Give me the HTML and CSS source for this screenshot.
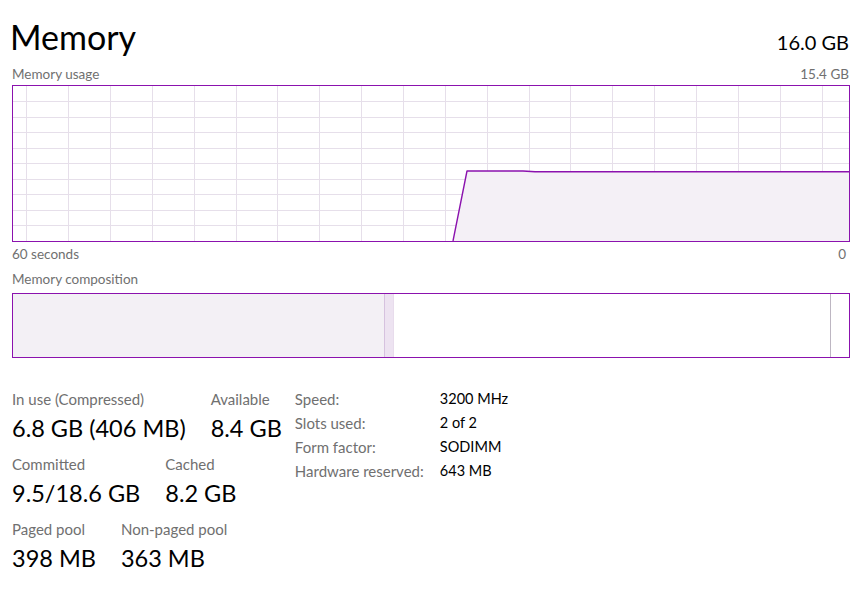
FILE: index.html
```html
<!DOCTYPE html>
<html>
<head>
<meta charset="utf-8">
<link rel="stylesheet" href="styles.css">
</head>
<body>
<div class="page">
  <div class="header">
    <h1 class="title">Memory</h1>
    <div class="total">16.0 GB</div>
  </div>
  <div class="caption-row usage-label">
    <span>Memory usage</span>
    <span>15.4 GB</span>
  </div>
  <div class="graph">
    <svg class="graph-svg" width="836" height="155" viewBox="0 0 836 155">
      <g class="grid">
        <line x1="13.5" y1="0" x2="13.5" y2="155"/>
        <line x1="55.5" y1="0" x2="55.5" y2="155"/>
        <line x1="97.5" y1="0" x2="97.5" y2="155"/>
        <line x1="139.5" y1="0" x2="139.5" y2="155"/>
        <line x1="181.5" y1="0" x2="181.5" y2="155"/>
        <line x1="223.5" y1="0" x2="223.5" y2="155"/>
        <line x1="264.5" y1="0" x2="264.5" y2="155"/>
        <line x1="306.5" y1="0" x2="306.5" y2="155"/>
        <line x1="348.5" y1="0" x2="348.5" y2="155"/>
        <line x1="390.5" y1="0" x2="390.5" y2="155"/>
        <line x1="432.5" y1="0" x2="432.5" y2="155"/>
        <line x1="474.5" y1="0" x2="474.5" y2="155"/>
        <line x1="516.5" y1="0" x2="516.5" y2="155"/>
        <line x1="557.5" y1="0" x2="557.5" y2="155"/>
        <line x1="599.5" y1="0" x2="599.5" y2="155"/>
        <line x1="641.5" y1="0" x2="641.5" y2="155"/>
        <line x1="683.5" y1="0" x2="683.5" y2="155"/>
        <line x1="725.5" y1="0" x2="725.5" y2="155"/>
        <line x1="767.5" y1="0" x2="767.5" y2="155"/>
        <line x1="809.5" y1="0" x2="809.5" y2="155"/>
        <line x1="0" y1="15.5" x2="836" y2="15.5"/>
        <line x1="0" y1="31.5" x2="836" y2="31.5"/>
        <line x1="0" y1="46.5" x2="836" y2="46.5"/>
        <line x1="0" y1="62.5" x2="836" y2="62.5"/>
        <line x1="0" y1="77.5" x2="836" y2="77.5"/>
        <line x1="0" y1="93.5" x2="836" y2="93.5"/>
        <line x1="0" y1="108.5" x2="836" y2="108.5"/>
        <line x1="0" y1="124.5" x2="836" y2="124.5"/>
        <line x1="0" y1="139.5" x2="836" y2="139.5"/>
      </g>
      <polygon class="area" points="440,155 454,85 510,85 522,85.8 836,85.8 836,155"/>
      <polyline class="usage" points="440,155 454,85 510,85 522,85.8 836,85.8"/>
    </svg>
  </div>
  <div class="caption-row axis">
    <span>60 seconds</span>
    <span>0</span>
  </div>
  <div class="caption-row comp-label">
    <span>Memory composition</span>
  </div>
  <div class="composition">
    <div class="seg in-use"></div>
    <div class="seg modified"></div>
    <div class="seg standby"></div>
    <div class="seg free"></div>
  </div>
  <div class="details">
    <div class="stats">
      <div class="stat-row">
        <div class="stat"><div class="stat-label">In use (Compressed)</div><div class="stat-value">6.8 GB (406 MB)</div></div>
        <div class="stat"><div class="stat-label">Available</div><div class="stat-value">8.4 GB</div></div>
      </div>
      <div class="stat-row">
        <div class="stat"><div class="stat-label">Committed</div><div class="stat-value">9.5/18.6 GB</div></div>
        <div class="stat"><div class="stat-label">Cached</div><div class="stat-value">8.2 GB</div></div>
      </div>
      <div class="stat-row">
        <div class="stat"><div class="stat-label">Paged pool</div><div class="stat-value">398 MB</div></div>
        <div class="stat"><div class="stat-label">Non-paged pool</div><div class="stat-value">363 MB</div></div>
      </div>
    </div>
    <div class="specs">
      <div class="spec-key">Speed:</div><div class="spec-val">3200 MHz</div>
      <div class="spec-key">Slots used:</div><div class="spec-val">2 of 2</div>
      <div class="spec-key">Form factor:</div><div class="spec-val">SODIMM</div>
      <div class="spec-key">Hardware reserved:</div><div class="spec-val">643 MB</div>
    </div>
  </div>
</div>
</body>
</html>
```

FILE: styles.css
```css
html, body {
  margin: 0;
  padding: 0;
  background: #ffffff;
}

body {
  font-family: "Segoe UI", "Lato", "Liberation Sans", sans-serif;
  color: #000000;
}

.page {
  width: 838px;
  padding: 15px 0 0 12px;
}

.header {
  display: flex;
  justify-content: space-between;
  align-items: baseline;
  height: 48px;
}

.title {
  margin: 0 0 0 -2px;
  font-size: 34px;
  font-weight: 400;
  line-height: 44px;
}

.total {
  font-size: 20px;
  line-height: 24px;
  padding-right: 1px;
}

.caption-row {
  display: flex;
  justify-content: space-between;
  font-size: 13.5px;
  line-height: 20px;
  color: #707070;
  padding-right: 1px;
}

.usage-label {
  line-height: 22px;
}

.graph {
  border: 1px solid #8b12ae;
  height: 155px;
  width: 836px;
}

.graph-svg {
  display: block;
}

.grid line {
  stroke: #e6dfea;
  stroke-width: 1;
}

.area {
  fill: #f4f0f6;
}

.usage {
  fill: none;
  stroke: #8b12ae;
  stroke-width: 1.4;
  stroke-linejoin: round;
}

.axis {
  line-height: 24px;
  padding-right: 4px;
}

.comp-label {
  line-height: 27px;
}

.composition {
  display: flex;
  border: 1px solid #8b12ae;
  height: 63px;
  width: 836px;
}

.seg.in-use {
  width: 371px;
  background: #f3f0f5;
}

.seg.modified {
  width: 8px;
  background: #ede3f1;
  border-left: 1px solid #d6c2df;
  border-right: 1px solid #e8dcec;
}

.seg.standby {
  width: 436px;
  background: #ffffff;
  border-right: 1px solid #bdb6c2;
}

.seg.free {
  flex: 1;
  background: #ffffff;
}

.details {
  display: flex;
  margin-top: 31px;
  gap: 13px;
}

.stats {
  display: flex;
  flex-direction: column;
}

.stat-row {
  display: flex;
  gap: 25px;
  height: 65px;
}

.stat-label {
  font-size: 15px;
  line-height: 20px;
  color: #707070;
}

.stat-value {
  font-size: 23.5px;
  line-height: 38px;
}

.specs {
  display: grid;
  grid-template-columns: 145px auto;
  grid-auto-rows: 24px;
  align-content: start;
  font-size: 14.5px;
  line-height: 20px;
}

.spec-key {
  color: #707070;
  font-size: 15px;
}

.spec-val {
  color: #000000;
}
```
